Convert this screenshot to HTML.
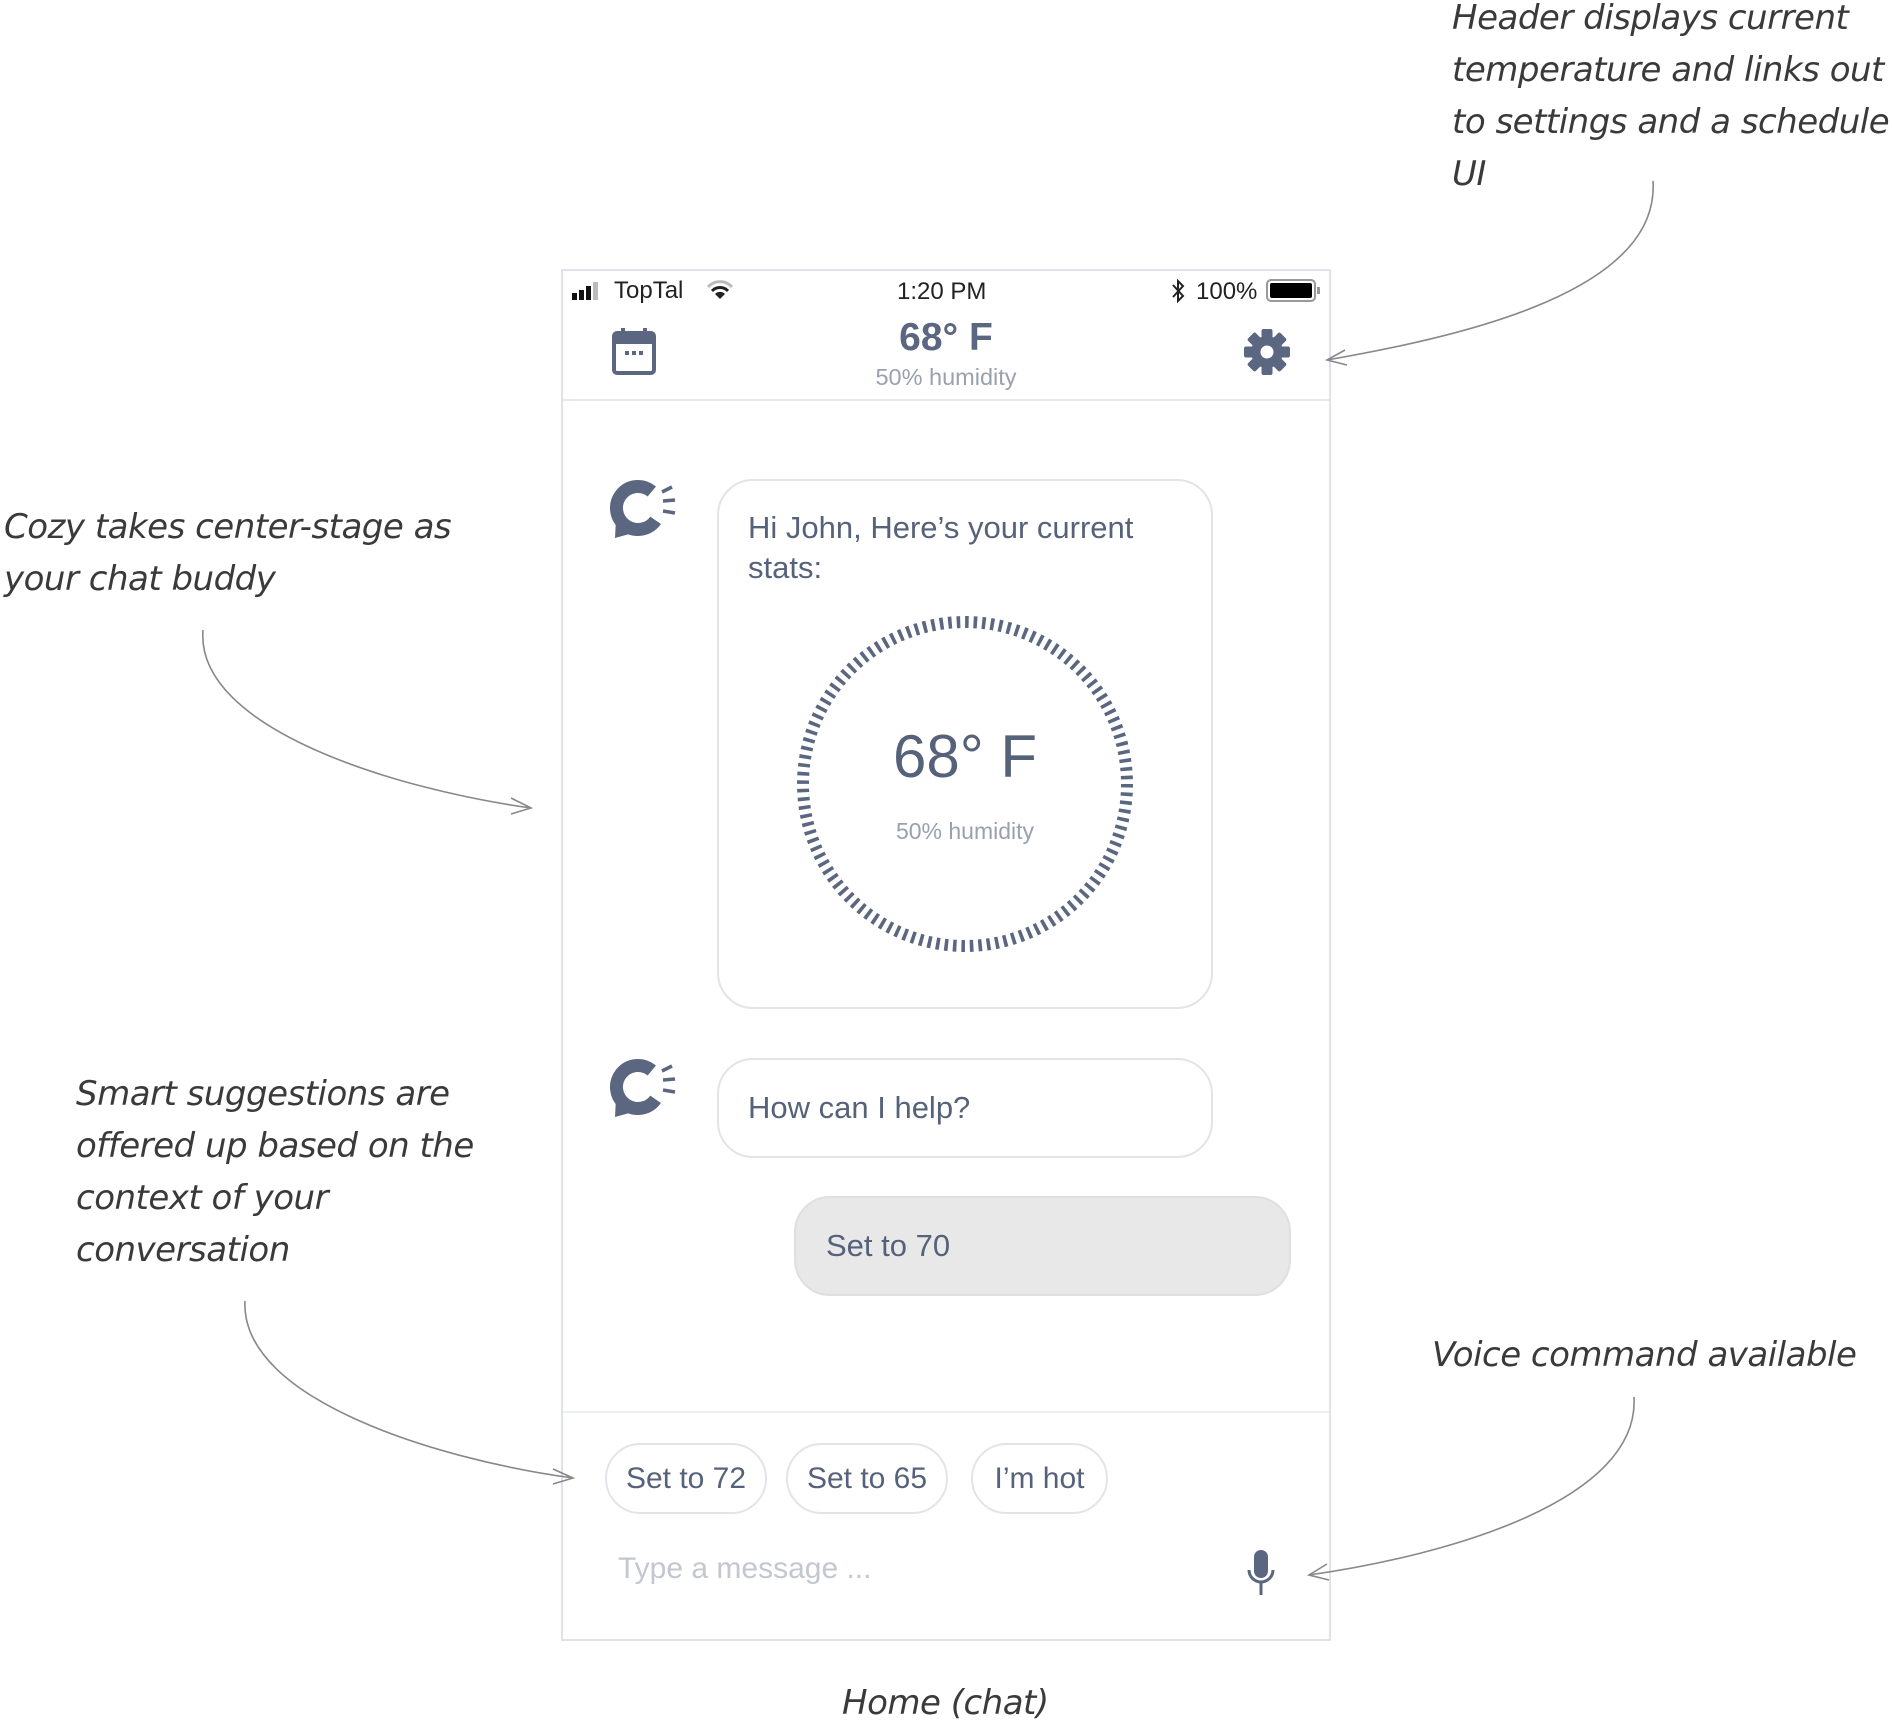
<!DOCTYPE html>
<html><head><meta charset="utf-8"><style>
*{margin:0;padding:0;box-sizing:border-box}
body{width:1892px;height:1724px;background:#fff;position:relative;overflow:hidden;font-family:"Liberation Sans",sans-serif;color:#5b6780}
.a{position:absolute;font-family:"DejaVu Sans","Liberation Sans",sans-serif;font-style:italic;color:#3a3a3a;font-size:34px;line-height:52px;white-space:nowrap;letter-spacing:-0.5px}
.t{position:absolute;white-space:nowrap}
.phone{position:absolute;left:561px;top:269px;width:770px;height:1372px;border:2px solid #dfe2ea}
.bub{position:absolute;border:2px solid #e2e4ea;background:#fff}
.chip{position:absolute;top:1443px;height:71px;border:2px solid #e2e4ea;border-radius:36px;font-size:30px;line-height:67px;text-align:center;color:#56627a}
</style></head><body>
<div class="a" style="left:1452px;top:-8px">Header displays current<br>temperature and links out<br>to settings and a schedule<br>UI</div>
<div class="a" style="left:4px;top:501px">Cozy takes center-stage as<br>your chat buddy</div>
<div class="a" style="left:76px;top:1068px">Smart suggestions are<br>offered up based on the<br>context of your<br>conversation</div>
<div class="a" style="left:1432px;top:1329px">Voice command available</div>
<div class="a" style="left:842px;top:1677px">Home (chat)</div>

<div class="phone"></div>
<div style="position:absolute;left:563px;top:399px;width:766px;height:2px;background:#e6e8ee"></div>
<div style="position:absolute;left:563px;top:1411px;width:766px;height:2px;background:#eceef2"></div>

<svg style="position:absolute;left:572px;top:280px" width="40" height="22"><rect x="0" y="13" width="5" height="7" fill="#111"/><rect x="7" y="10" width="5" height="10" fill="#111"/><rect x="14" y="6" width="5" height="14" fill="#111"/><rect x="21" y="2" width="5" height="18" fill="#bbb"/></svg>
<div class="t" style="left:614px;top:277px;font-size:24px;color:#222">TopTal</div>
<svg style="position:absolute;left:706px;top:279px" width="28" height="22"><path d="M2 8 A16 16 0 0 1 26 8" stroke="#bbb" stroke-width="3" fill="none"/><path d="M6 12 A11 11 0 0 1 22 12" stroke="#222" stroke-width="3" fill="none"/><path d="M14 20 L9 15 A7 7 0 0 1 19 15Z" fill="#222"/></svg>
<div class="t" style="left:897px;top:278px;font-size:24px;color:#222">1:20 PM</div>
<svg style="position:absolute;left:1170px;top:278px" width="16" height="26"><path d="M3 7 L13 18 L8 23 L8 3 L13 8 L3 19" stroke="#222" stroke-width="2" fill="none"/></svg>
<div class="t" style="left:1196px;top:278px;font-size:24px;color:#222">100%</div>
<svg style="position:absolute;left:1266px;top:279px" width="56" height="24"><rect x="1" y="1" width="48" height="21" rx="4" fill="none" stroke="#999" stroke-width="2"/><rect x="4" y="4" width="42" height="15" rx="2" fill="#000"/><rect x="51" y="8" width="3" height="7" fill="#999"/></svg>

<svg style="position:absolute;left:612px;top:328px" width="44" height="47"><rect x="9" y="0" width="4" height="8" fill="#5b6780"/><rect x="31" y="0" width="4" height="8" fill="#5b6780"/><rect x="2" y="5" width="40" height="40" rx="3" fill="none" stroke="#5b6780" stroke-width="4"/><rect x="2" y="5" width="40" height="11" fill="#5b6780"/><rect x="13" y="23" width="4" height="4" fill="#5b6780"/><rect x="20" y="23" width="4" height="4" fill="#5b6780"/><rect x="27" y="23" width="4" height="4" fill="#5b6780"/></svg>
<div class="t" style="left:846px;top:316px;width:200px;text-align:center;font-size:39px;font-weight:bold;color:#5b6780">68° F</div>
<div class="t" style="left:846px;top:364px;width:200px;text-align:center;font-size:23.5px;color:#9aa1ae">50% humidity</div>
<svg style="position:absolute;left:1244px;top:329px" width="46" height="46" viewBox="-23 -23 46 46"><g fill="#5b6780"><circle r="16"/><rect x="-5.5" y="-23" width="11" height="46" rx="2"/><rect x="-5.5" y="-23" width="11" height="46" rx="2" transform="rotate(45)"/><rect x="-5.5" y="-23" width="11" height="46" rx="2" transform="rotate(90)"/><rect x="-5.5" y="-23" width="11" height="46" rx="2" transform="rotate(135)"/></g><circle r="6.5" fill="#fff"/></svg>

<svg style="position:absolute;left:607px;top:471px" width="72" height="70" viewBox="0 0 72 70"><path d="M44.8 20.5 A21.5 21.5 0 1 0 48.6 49.3" stroke="#5b6780" stroke-width="13" fill="none"/><path d="M9 48 L8 67 L26 62Z" fill="#5b6780"/><g stroke="#5b6780" stroke-width="3.5"><line x1="55" y1="21" x2="65" y2="16"/><line x1="56" y1="30" x2="68" y2="29"/><line x1="56" y1="40" x2="68" y2="42"/></g></svg>
<svg style="position:absolute;left:607px;top:1050px" width="72" height="70" viewBox="0 0 72 70"><path d="M44.8 20.5 A21.5 21.5 0 1 0 48.6 49.3" stroke="#5b6780" stroke-width="13" fill="none"/><path d="M9 48 L8 67 L26 62Z" fill="#5b6780"/><g stroke="#5b6780" stroke-width="3.5"><line x1="55" y1="21" x2="65" y2="16"/><line x1="56" y1="30" x2="68" y2="29"/><line x1="56" y1="40" x2="68" y2="42"/></g></svg>

<div class="bub" style="left:717px;top:479px;width:496px;height:530px;border-radius:36px"></div>
<div class="t" style="left:748px;top:508px;font-size:31px;line-height:40px;color:#56627a">Hi John, Here’s your current<br>stats:</div>
<svg style="position:absolute;left:795px;top:614px" width="340" height="340"><circle cx="170" cy="170" r="162" fill="none" stroke="#5b6780" stroke-width="12" stroke-dasharray="3.6 4.88"/></svg>
<div class="t" style="left:815px;top:722px;width:300px;text-align:center;font-size:60px;color:#56627a">68° F</div>
<div class="t" style="left:815px;top:818px;width:300px;text-align:center;font-size:23px;color:#9aa1ae">50% humidity</div>

<div class="bub" style="left:717px;top:1058px;width:496px;height:100px;border-radius:36px"></div>
<div class="t" style="left:748px;top:1090px;font-size:31px;color:#56627a">How can I help?</div>
<div class="bub" style="left:794px;top:1196px;width:497px;height:100px;border-radius:36px;background:#e8e8e9;border-color:#dedfe2"></div>
<div class="t" style="left:826px;top:1228px;font-size:31px;color:#56627a">Set to 70</div>

<div class="chip" style="left:605px;width:162px">Set to 72</div>
<div class="chip" style="left:786px;width:162px">Set to 65</div>
<div class="chip" style="left:971px;width:137px">I’m hot</div>
<div class="t" style="left:618px;top:1552px;font-size:30px;color:#c3c7cf">Type a message ...</div>
<svg style="position:absolute;left:1245px;top:1550px" width="32" height="46"><rect x="9" y="0" width="14" height="28" rx="7" fill="#5b6780"/><path d="M4 20 A12 12 0 0 0 28 20" stroke="#5b6780" stroke-width="3" fill="none"/><rect x="14.5" y="32" width="3" height="13" fill="#5b6780"/></svg>

<svg style="position:absolute;left:0;top:0" width="1892" height="1724"><g stroke="#888" stroke-width="1.6" fill="none">
<path d="M1653 181 C1660 290 1470 335 1327 360"/><path d="M1345 350 L1327 360 L1347 365"/>
<path d="M203 630 C195 730 400 790 531 808"/><path d="M511 798 L531 808 L511 814"/>
<path d="M245 1301 C240 1400 440 1460 573 1478"/><path d="M553 1469 L573 1478 L553 1484"/>
<path d="M1634 1397 C1640 1500 1450 1555 1309 1575"/><path d="M1327 1564 L1309 1575 L1329 1580"/>
</g></svg>
</body></html>
